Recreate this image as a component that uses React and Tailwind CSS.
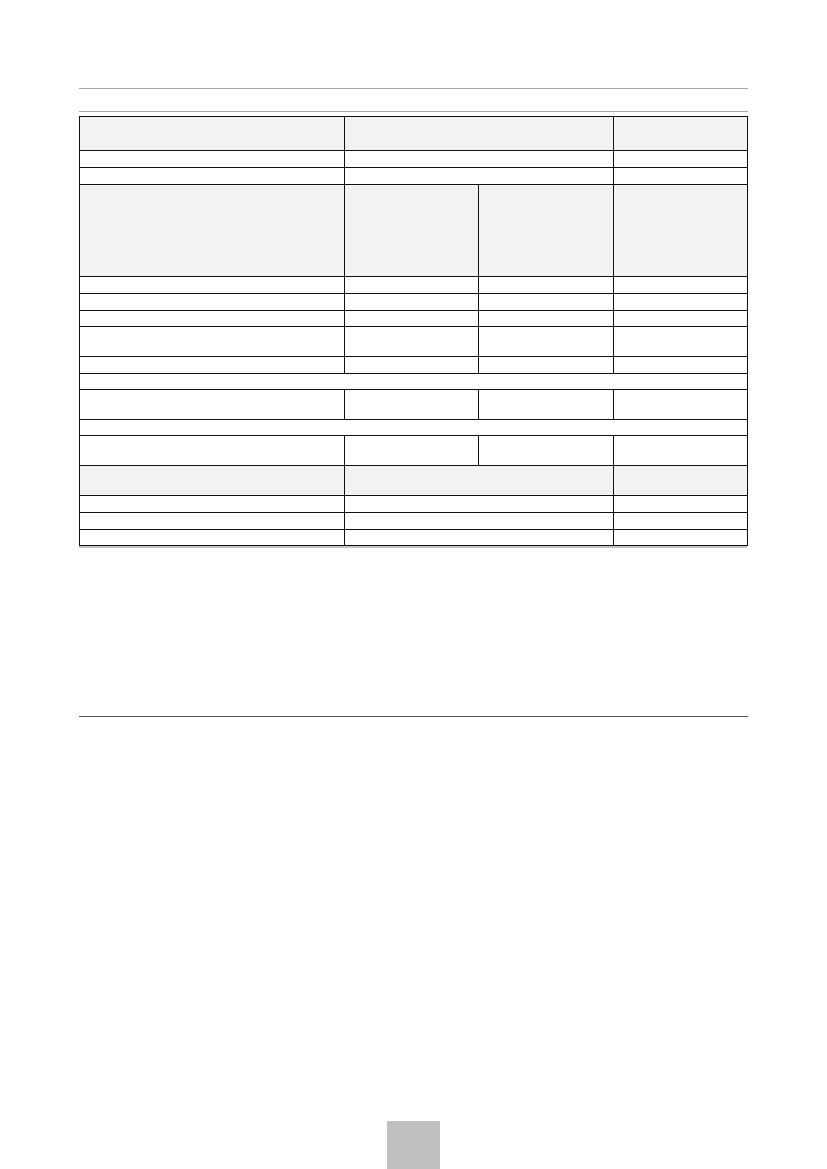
import React from 'react';

const rows = [
  { h: 'h-[34px]', head: true, cells: [1, 2, 1] },
  { h: 'h-[17px]', cells: [1, 2, 1] },
  { h: 'h-[17px]', cells: [1, 2, 1] },
  { h: 'h-[92px]', head: true, cells: [1, 1, 1, 1] },
  { h: 'h-[17px]', cells: [1, 1, 1, 1] },
  { h: 'h-[17px]', cells: [1, 1, 1, 1] },
  { h: 'h-[16px]', cells: [1, 1, 1, 1] },
  { h: 'h-[30px]', cells: [1, 1, 1, 1] },
  { h: 'h-[17px]', cells: [1, 1, 1, 1] },
  { h: 'h-[16px]', cells: [4] },
  { h: 'h-[30px]', cells: [1, 1, 1, 1] },
  { h: 'h-[16px]', cells: [4] },
  { h: 'h-[30px]', cells: [1, 1, 1, 1] },
  { h: 'h-[30px]', head: true, cells: [1, 2, 1] },
  { h: 'h-[17px]', cells: [1, 2, 1] },
  { h: 'h-[17px]', cells: [1, 2, 1] },
  { h: 'h-[16px]', cells: [1, 2, 1] },
];

export default function App() {
  return (
    <div className="min-h-[1169px] w-[827px] bg-white font-['Liberation_Sans',Arial,sans-serif] flex flex-col">
      <div className="px-[79px] pt-[88px]">
        <div className="h-px bg-[#a8a8a8]" />
        <div className="h-[22px]" />
        <div className="h-px bg-[#a8a8a8]" />
        <table className="mt-[4px] w-[668px] table-fixed border-collapse">
          <colgroup>
            <col className="w-[265px]" />
            <col className="w-[134px]" />
            <col className="w-[135px]" />
            <col className="w-[134px]" />
          </colgroup>
          <tbody>
            {rows.map((r, i) => (
              <tr key={i} className={r.head ? 'bg-[#f2f2f2]' : 'bg-white'}>
                {r.cells.map((span, j) => (
                  <td
                    key={j}
                    colSpan={span}
                    className={`${r.h} p-0 border-[1.5px] border-[#111]`}
                  />
                ))}
              </tr>
            ))}
          </tbody>
        </table>
        <div className="h-[2px] w-[668px] bg-[#c4c4c4]" />
        <div className="h-[168px]" />
        <div className="h-px bg-[#555]" />
      </div>
      <div className="flex-1" />
      <div className="mx-auto w-[53px] h-[48px] bg-[#c0c0c0]" />
    </div>
  );
}
